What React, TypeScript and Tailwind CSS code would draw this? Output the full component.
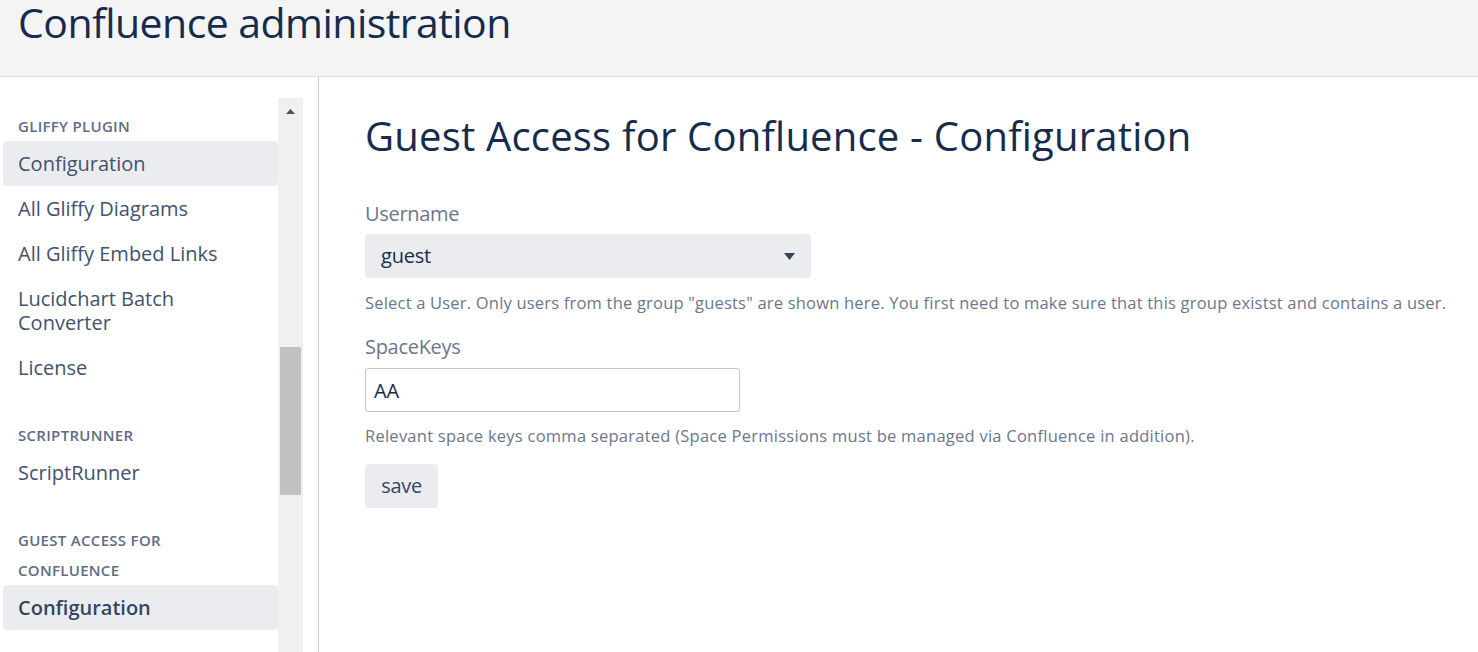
import React from "react";

type NavItem = { label: string; active?: boolean };
type NavGroup = { title: string; items: NavItem[] };

const groups: NavGroup[] = [
    {
        title: "Gliffy Plugin",
        items: [
            { label: "Configuration", active: true },
            { label: "All Gliffy Diagrams" },
            { label: "All Gliffy Embed Links" },
            { label: "Lucidchart Batch Converter" },
            { label: "License" },
        ],
    },
    {
        title: "ScriptRunner",
        items: [{ label: "ScriptRunner" }],
    },
    {
        title: "Guest Access for Confluence",
        items: [{ label: "Configuration", active: true }],
    },
];

const font = { fontFamily: '"Open Sans", "Noto Sans", sans-serif' };

const SideNav: React.FC = () => (
    <div className="w-[278px] shrink-0 pl-[3px] pt-[13px]">
        {groups.map((group, gi) => (
            <div key={group.title + gi} className={gi > 0 ? "mt-[30px]" : ""}>
                <h4 className="w-[200px] px-[15px] text-[15px] font-semibold uppercase leading-[30px] tracking-[0.3px] text-[#5e6c84]">
                    {group.title}
                </h4>
                <ul>
                    {group.items.map((item) => (
                        <li
                            key={item.label}
                            className={
                                "rounded-[4px] px-[15px] py-[10.5px] text-[20px] leading-[24px] " +
                                (item.active
                                    ? "bg-[#ebecf0] " + (gi === 2 ? "font-semibold text-[#344563]" : "text-[#42526e]")
                                    : "text-[#42526e]")
                            }
                        >
                            {item.label === "Lucidchart Batch Converter" ? (
                                <>
                                    Lucidchart Batch
                                    <br />
                                    Converter
                                </>
                            ) : (
                                item.label
                            )}
                        </li>
                    ))}
                </ul>
            </div>
        ))}
    </div>
);

// hand-drawn scrollbar so the sidebar keeps the Windows look
const Scrollbar: React.FC = () => (
    <div className="flex w-[25px] flex-col bg-[#f0f0f0]">
        <div className="flex h-[26px] items-center justify-center">
            <svg width="9" height="5" viewBox="0 0 9 5">
                <path d="M0 5 L4.5 0 L9 5 Z" fill="#505050" />
            </svg>
        </div>
        <div className="h-[223px]" />
        <div className="mx-[2px] h-[148px] bg-[#c1c1c1]" />
    </div>
);

export default function App() {
    return (
        <div className="h-[652px] overflow-hidden bg-white" style={font}>
            <header className="h-[77px] border-b border-[#dcdcdc] bg-[#f4f4f4] pl-[18px]">
                <h1 className="text-[41px] font-medium leading-[44px] tracking-[-0.55px] text-[#172b4d]">
                    Confluence administration
                </h1>
            </header>

            <div className="flex h-[575px]">
                <aside className="flex w-[319px] shrink-0 flex-col border-r border-[#cfcfcf] pt-[21px]">
                    <div className="flex flex-1">
                        <SideNav />
                        <Scrollbar />
                    </div>
                </aside>

                <main className="flex-1 pl-[46px] pt-[34px]">
                    <h2 className="text-[40px] font-medium leading-[50px] tracking-[0.2px] text-[#172b4d]">
                        Guest Access for Confluence - Configuration
                    </h2>

                    <form className="mt-[38px]" onSubmit={(e) => e.preventDefault()}>
                        <label className="block text-[20px] leading-[30px] tracking-[-0.3px] text-[#6b778c]">
                            Username
                        </label>
                        <div className="mt-[5px] flex h-[44px] w-[446px] items-center justify-between rounded-[4px] bg-[#ebecf0] pl-[16px] pr-[16px]">
                            <span className="text-[20px] tracking-[-0.2px] text-[#172b4d]">guest</span>
                            <svg width="11" height="7" viewBox="0 0 11 7">
                                <path d="M0 0 H11 L5.5 7 Z" fill="#344563" />
                            </svg>
                        </div>
                        <p className="mt-[13px] text-[16.5px] leading-[24px] tracking-[0.2px] text-[#6b778c]">
                            Select a User. Only users from the group "guests" are shown here. You first need to make sure
                            that this group existst and contains a user.
                        </p>

                        <label className="mt-[17px] block text-[20px] leading-[30px] tracking-[-0.3px] text-[#6b778c]">
                            SpaceKeys
                        </label>
                        <input
                            defaultValue="AA"
                            className="mt-[6px] block h-[44px] w-[375px] rounded-[3px] border border-[#c1c7d0] bg-white px-[8px] text-[20px] tracking-[-0.2px] text-[#172b4d] outline-none"
                        />
                        <p className="mt-[12px] text-[16.5px] leading-[24px] tracking-[0.25px] text-[#6b778c]">
                            Relevant space keys comma separated (Space Permissions must be managed via Confluence in
                            addition).
                        </p>

                        <button
                            type="submit"
                            className="mt-[16px] h-[44px] w-[73px] rounded-[4px] bg-[#ebecf0] text-[20px] tracking-[-0.3px] text-[#344563]"
                        >
                            save
                        </button>
                    </form>
                </main>
            </div>
        </div>
    );
}
